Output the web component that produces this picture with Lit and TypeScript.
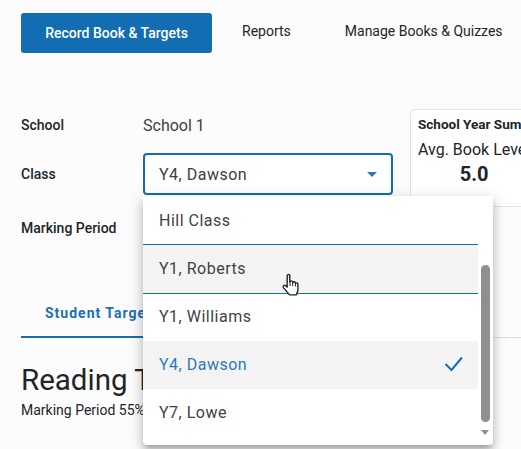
import { LitElement, html, css, svg } from 'lit';
import { customElement, state } from 'lit/decorators.js';
import { classMap } from 'lit/directives/class-map.js';

const classes = ['Hill Class', 'Y1, Roberts', 'Y1, Williams', 'Y4, Dawson', 'Y7, Lowe'];

const handCursor = svg`
  <path d="M7.2 2.6c0-1.6 2.6-1.6 2.6 0v6.2c.2-1.2 2.6-1.3 2.8.2l.1.6c.3-1.2 2.5-1.2 2.7.3l.1.6c.4-1 2.3-.9 2.4.6v5.6c0 1.6-.5 2.8-1.2 4l-.6 1.2H9.6L3.4 14.6c-1-1.3.8-3 2.2-1.9l1.6 1.4z"
    fill="#fff" stroke="#23232b" stroke-width="1.4" stroke-linejoin="round" />
  <path d="M10 8.6v4.4M12.7 9.6v3.6M15.4 10.4v3" stroke="#23232b" stroke-width="1" fill="none" />
`;

@customElement('app-root')
export class AppRoot extends LitElement {
  @state() selected = 'Y4, Dawson';
  @state() hovered = 'Y1, Roberts';

  static styles = css`
    :host {
      display: block;
      position: relative;
      width: 521px;
      height: 449px;
      overflow: hidden;
      background: #fcfcfc;
      color: #212529;
      font-family: Roboto, 'Liberation Sans', sans-serif;
      font-size: 14px;
    }

    .nav {
      display: flex;
      align-items: center;
      padding: 13px 0 0 21px;
    }

    .nav-item {
      font-size: 14px;
      white-space: nowrap;
      color: #212529;
      margin-bottom: 4px;
    }

    .nav-active {
      width: 191px;
      height: 40px;
      display: flex;
      align-items: center;
      justify-content: center;
      box-sizing: border-box;
      background: #136db3;
      border-radius: 3px;
      color: #fff;
      font-weight: 500;
      margin: 0 30px 0 0;
    }

    .reports {
      margin-right: 54px;
    }

    .filters {
      display: flex;
      padding: 57px 0 0 21px;
    }

    .form {
      width: 372px;
      flex: none;
      display: grid;
      grid-template-columns: 122px 250px;
      grid-template-rows: 30px 42px 40px;
      row-gap: 13px;
      align-items: center;
    }

    .label {
      font-size: 14px;
      font-weight: 500;
      color: #212529;
    }

    .static-value {
      font-size: 16px;
      color: #3a3f44;
    }

    .select {
      grid-column: 2;
      height: 42px;
      box-sizing: border-box;
      border: 2px solid #136db3;
      border-radius: 4px;
      display: flex;
      align-items: center;
      justify-content: space-between;
      padding: 0 14px;
      font-size: 16px;
      letter-spacing: 0.5px;
      color: #3c4043;
      background: #fff;
    }

    .caret {
      width: 0;
      height: 0;
      border-left: 5px solid transparent;
      border-right: 5px solid transparent;
      border-top: 5px solid #2a7ab9;
    }

    .card {
      flex: none;
      width: 200px;
      height: 98px;
      box-sizing: border-box;
      margin: -1px 0 0 17px;
      padding: 6px 7px;
      background: #fff;
      border: 1px solid #e2e2e2;
      border-radius: 4px;
      white-space: nowrap;
    }

    .card-title {
      font-size: 13.5px;
      font-weight: 700;
      color: #212529;
    }

    .card-stat {
      display: inline-flex;
      flex-direction: column;
      align-items: center;
      margin-top: 8px;
    }

    .card-stat-label {
      font-size: 16px;
      color: #212529;
    }

    .card-stat-value {
      font-size: 20px;
      font-weight: 700;
      color: #212529;
      margin-top: 3px;
    }

    .tabs {
      display: flex;
      margin: 0 0 0 21px;
      padding-top: 57px;
      border-bottom: 1px solid #e0e0e0;
    }

    .tab {
      box-sizing: border-box;
      width: 180px;
      height: 33px;
      padding-left: 24px;
      font-size: 14px;
      font-weight: 700;
      letter-spacing: 1px;
      color: #1d70b5;
      white-space: nowrap;
      border-bottom: 2px solid #136db3;
      margin-bottom: -1px;
    }

    .content {
      padding: 25px 0 0 21px;
      white-space: nowrap;
    }

    h1 {
      margin: 0;
      font-size: 29.5px;
      line-height: 34px;
      font-weight: 400;
      color: #212529;
    }

    .progress {
      font-size: 14px;
      line-height: 16px;
      margin-top: 5px;
      color: #212529;
    }

    .menu {
      position: absolute;
      left: 143px;
      top: 196px;
      width: 350px;
      height: 249px;
      background: #fff;
      border-radius: 0 0 4px 4px;
      box-shadow:
        0 5px 5px -3px rgba(0, 0, 0, 0.2),
        0 8px 10px 1px rgba(0, 0, 0, 0.14),
        0 3px 14px 2px rgba(0, 0, 0, 0.12);
      display: flex;
    }

    .options {
      width: 335px;
      flex: none;
    }

    .option {
      position: relative;
      height: 48px;
      box-sizing: border-box;
      display: flex;
      align-items: center;
      justify-content: space-between;
      padding: 0 14px 0 16px;
      font-size: 16px;
      letter-spacing: 0.5px;
      color: #424242;
    }

    .option + .option {
      padding-bottom: 2px;
    }

    .option.hover {
      border-top: 1px solid #136db3;
      border-bottom: 1px solid #136db3;
      background: #f4f4f4;
      height: 50px;
      margin-bottom: -1px;
    }

    .option.selected {
      background: #f4f4f4;
      color: #2a7ab9;
    }

    .check {
      width: 20px;
      height: 20px;
      display: block;
    }

    .scrollbar {
      flex: 1;
      position: relative;
    }

    .thumb {
      position: absolute;
      left: 3px;
      top: 69px;
      width: 9px;
      height: 157px;
      background: #8f8f8f;
      border-radius: 5px;
    }

    .arrow {
      position: absolute;
      left: 3px;
      top: 234px;
      width: 0;
      height: 0;
      border-left: 4.5px solid transparent;
      border-right: 4.5px solid transparent;
      border-top: 5px solid #8f8f8f;
    }

    .cursor {
      position: absolute;
      left: 280px;
      top: 273px;
      width: 22px;
      height: 24px;
    }
  `;

  render() {
    return html`
      <div class="nav">
        <div class="nav-item nav-active" style="margin-bottom:0">Record Book &amp; Targets</div>
        <div class="nav-item reports">Reports</div>
        <div class="nav-item">Manage Books &amp; Quizzes</div>
      </div>

      <div class="filters">
        <div class="form">
          <div class="label">School</div>
          <div class="static-value">School 1</div>
          <div class="label">Class</div>
          <div class="select">
            <span>${this.selected}</span>
            <span class="caret"></span>
          </div>
          <div class="label">Marking Period</div>
        </div>
        <div class="card">
          <div class="card-title">School Year Summary</div>
          <div class="card-stat">
            <span class="card-stat-label">Avg. Book Level</span>
            <span class="card-stat-value">5.0</span>
          </div>
        </div>
      </div>

      <div class="tabs"><div class="tab">Student Targets</div></div>

      <div class="content">
        <h1>Reading Targets</h1>
        <div class="progress">Marking Period 55% complete</div>
      </div>

      <div class="menu">
        <div class="options">
          ${classes.map(
            (name) => html`
              <div
                class=${classMap({
                  option: true,
                  hover: name === this.hovered,
                  selected: name === this.selected,
                })}
              >
                <span>${name}</span>
                ${name === this.selected
                  ? html`<svg class="check" viewBox="0 0 20 20">
                      <path d="M1.5 10L7.5 16L18 3.5" fill="none" stroke="#136db3" stroke-width="2" />
                    </svg>`
                  : ''}
              </div>
            `,
          )}
        </div>
        <div class="scrollbar">
          <div class="thumb"></div>
          <div class="arrow"></div>
        </div>
      </div>

      <svg class="cursor" viewBox="0 0 22 24">${handCursor}</svg>
    `;
  }
}
